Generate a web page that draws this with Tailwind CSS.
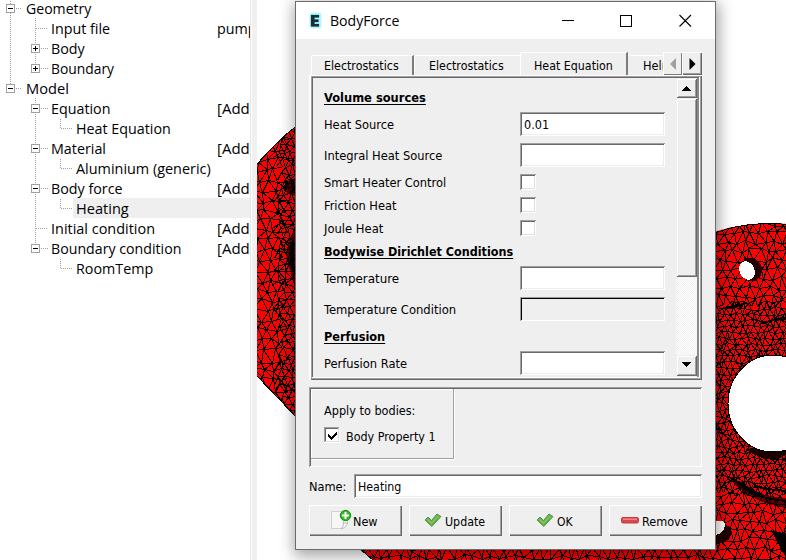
<!DOCTYPE html>
<html lang="en">
<head>
<meta charset="utf-8">
<title>BodyForce</title>
<script src="https://cdn.jsdelivr.net/npm/@tailwindcss/browser@4"></script>
</head>
<body class="relative w-[786px] h-[560px] overflow-hidden bg-white text-black flex">

<!-- Model tree -->
<aside class="relative w-[250px] h-[560px] shrink-0 overflow-hidden bg-white font-['Open_Sans',sans-serif] text-[14.3px] leading-[20px] whitespace-nowrap">
  <svg class="absolute left-0 top-0" width="250" height="290" shape-rendering="crispEdges" fill="none">
    <rect x="73" y="198" width="177" height="20" fill="#efefef"/>
    <g stroke="#a0a0a0" stroke-dasharray="1 1">
      <path d="M10.5 1V88M16 8.5H22M16 88.5H22"/>
      <path d="M35.5 18V68M36 28.5H48M41 48.5H48M41 68.5H48"/>
      <path d="M35.5 98V248M41 108.5H48M41 148.5H48M41 188.5H48M36 228.5H48M41 248.5H48"/>
      <path d="M60.5 119V129M61 128.5H72M60.5 159V169M61 168.5H72M60.5 199V209M61 208.5H72M60.5 259V269M61 268.5H72"/>
    </g>
    <g stroke="#a0a0a0" fill="#fff">
      <rect x="6.5" y="4.5" width="8" height="8"/><rect x="6.5" y="84.5" width="8" height="8"/>
      <rect x="31.5" y="44.5" width="8" height="8"/><rect x="31.5" y="64.5" width="8" height="8"/>
      <rect x="31.5" y="104.5" width="8" height="8"/><rect x="31.5" y="144.5" width="8" height="8"/>
      <rect x="31.5" y="184.5" width="8" height="8"/><rect x="31.5" y="244.5" width="8" height="8"/>
    </g>
    <path stroke="#000" d="M8 8.5H13M8 88.5H13M33 48.5H38M35.5 46V51M33 68.5H38M35.5 66V71M33 108.5H38M33 148.5H38M33 188.5H38M33 248.5H38"/>
  </svg>
  <div class="relative -mt-px flex flex-col">
    <div class="h-5 pl-[26px]"><span class="inline-block origin-left" data-w="65">Geometry</span></div>
    <div class="h-5 pl-[51px] flex"><span class="w-[166px] shrink-0"><span class="inline-block origin-left" data-w="59">Input file</span></span><span>pump</span></div>
    <div class="h-5 pl-[51px]"><span class="inline-block origin-left" data-w="34">Body</span></div>
    <div class="h-5 pl-[51px]"><span class="inline-block origin-left" data-w="63">Boundary</span></div>
    <div class="h-5 pl-[26px]"><span class="inline-block origin-left" data-w="43">Model</span></div>
    <div class="h-5 pl-[51px] flex"><span class="w-[166px] shrink-0"><span class="inline-block origin-left" data-w="59">Equation</span></span><span class="inline-block origin-left" data-w="32.5">[Add</span></div>
    <div class="h-5 pl-[76px]"><span class="inline-block origin-left" data-w="95">Heat Equation</span></div>
    <div class="h-5 pl-[51px] flex"><span class="w-[166px] shrink-0"><span class="inline-block origin-left" data-w="55">Material</span></span><span class="inline-block origin-left" data-w="32.5">[Add</span></div>
    <div class="h-5 pl-[76px]"><span class="inline-block origin-left" data-w="135">Aluminium (generic)</span></div>
    <div class="h-5 pl-[51px] flex"><span class="w-[166px] shrink-0"><span class="inline-block origin-left" data-w="72">Body force</span></span><span class="inline-block origin-left" data-w="32.5">[Add</span></div>
    <div class="h-5 pl-[76px]"><span class="inline-block origin-left" data-w="53">Heating</span></div>
    <div class="h-5 pl-[51px] flex"><span class="w-[166px] shrink-0"><span class="inline-block origin-left" data-w="104">Initial condition</span></span><span class="inline-block origin-left" data-w="32.5">[Add</span></div>
    <div class="h-5 pl-[51px] flex"><span class="w-[166px] shrink-0"><span class="inline-block origin-left" data-w="130">Boundary condition</span></span><span class="inline-block origin-left" data-w="32.5">[Add</span></div>
    <div class="h-5 pl-[76px]"><span class="inline-block origin-left" data-w="77">RoomTemp</span></div>
  </div>
</aside>
<div class="w-[7px] h-[560px] shrink-0 bg-[#f0f0f0] border-l border-[#e6e6e6] shadow-[inset_1px_0_#fff]"></div>

<!-- Mesh viewport -->
<main class="w-[529px] h-[560px] shrink-0 overflow-hidden bg-white">
  <svg width="529" height="560" viewBox="257 0 529 560" shape-rendering="crispEdges">
    <defs>
      <clipPath id="cl"><path d="M257 164L270 150L283 137L300 123V421L257 376Z"/></clipPath>
      <clipPath id="cr"><path d="M357 546H700V237Q735 223 775 223L786 224V560H373Z"/></clipPath>
    </defs>
    <g clip-path="url(#cl)">
      <rect x="257" y="100" width="60" height="330" fill="#f00"/>
      <path d="M300 178Q286 178 284 187Q286 196 300 196ZM300 225Q287 237 287 252Q288 275 300 292Z" fill="#600000"/>
      <path id="ml" fill="none" stroke="#000"/>
      <path d="M285 180l3 1-2 10h-2zM294 236l-4 10v18l5 12-1-20zM291 180h3v12h-2z" fill="#000"/>
    </g>
    <path d="M257 164L270 150L283 137L300 123M257 376L300 421" fill="none" stroke="#000"/>
    <g clip-path="url(#cr)">
      <rect x="340" y="210" width="450" height="360" fill="#f00"/>
      <path d="M728 476Q752 496 786 498V508Q746 502 728 476Z" fill="#600000"/>
      <path id="mr" fill="none" stroke="#000"/>
      <path id="mf" fill="none" stroke="#000"/>
      <path d="M744 258Q759 256 762 268Q762 278 755 281L748 281Z" fill="#200000"/>
      <path d="M716 522Q731 524 731 534Q730 543 716 544Z" fill="#200000"/>
      <path d="M745 449Q770 466 786 455V445Z" fill="#180000"/>
      <path d="M719 309l14-1 15-5-13 2zM760 324l14-5 12-2v2l-14 2zM728 476l20 15 14 4 -12-7zM772 531l14 3v23z" fill="#000" stroke="#000"/>
      <path d="M750 493Q770 500 786 501M754 486Q770 490 786 491" fill="none" stroke="#000" stroke-width="2"/>
    </g>
    <path d="M360 549L373 560M715 233Q740 223 775 223.500L786 224.500" fill="none" stroke="#000"/>
    <ellipse cx="773" cy="403.500" rx="45" ry="48.500" fill="#fff" stroke="#000"/>
    <ellipse cx="747" cy="270.500" rx="7.500" ry="9.500" transform="rotate(-25 747 270.500)" fill="#fff"/>
    <path d="M714 522Q722 519 725 523Q725 534 714 535Z" fill="#fff"/>
  </svg>
</main>

<!-- BodyForce dialog -->
<section class="absolute left-[295px] top-[1px] w-[421px] h-[549px] border border-[#6c6c6c] bg-[#efefef] shadow-[1px_4px_14px_2px_rgba(0,0,0,0.36)] flex flex-col font-['DejaVu_Sans_Condensed','DejaVu_Sans',sans-serif] text-[12px] leading-[16px] whitespace-nowrap">
  <header class="h-[37px] shrink-0 bg-white flex items-center pl-[13px]">
    <svg width="14" height="18" viewBox="0 0 14 18">
      <rect x="0.500" y="0.500" width="12" height="16" rx="3" fill="#b9f4f8"/>
      <path d="M2 3H10V5.500H5.500V7.500H9.500V10H5.500V12H10V14.500H2Z" fill="#202c30" stroke="#5fdde6" stroke-width="1" paint-order="stroke"/>
    </svg>
    <span class="ml-[7px] font-['Open_Sans',sans-serif] text-[14.3px] leading-[20px]"><span class="inline-block origin-left" data-w="69">BodyForce</span></span>
    <svg class="ml-auto mr-[22px]" width="131" height="14" viewBox="0 0 131 14" fill="none" stroke="#000">
      <path d="M0 6.500H12M58.500 1.500H69.500V12.500H58.500Z" shape-rendering="crispEdges"/>
      <path d="M117.500 1L129 12.500M129 1L117.500 12.500" stroke-width="1.100"/>
    </svg>
  </header>

  <div class="mt-[13px] ml-[13px] w-[393px] h-[23px] shrink-0 flex items-end overflow-hidden">
    <div class="ml-[2px] w-[103px] shrink-0 h-[20px] rounded-tl-[2px] border-t border-l border-white border-r-2 border-r-[#7c7c7c] pl-[12px] pt-[2px]"><span class="inline-block origin-left" data-w="75">Electrostatics</span></div>
    <div class="w-[106px] shrink-0 h-[20px] rounded-tl-[2px] border-t border-l border-white pl-[14px] pt-[2px]"><span class="inline-block origin-left" data-w="75">Electrostatics</span></div>
    <div class="w-[108px] shrink-0 h-[23px] rounded-tl-[2px] border-t border-l border-white border-r-2 border-r-[#7c7c7c] pl-[13px] pt-[5px]"><span class="inline-block origin-left" data-w="79">Heat Equation</span></div>
    <div class="w-[35px] shrink-0 h-[20px] border-t border-white pl-[15px] pt-[2px] overflow-hidden"><span class="inline-block origin-left" data-w="58">Helmholtz</span></div>
    <div class="w-[19px] shrink-0 h-[23px] bg-[#efefef] shadow-[inset_1px_1px_#fff,inset_-1px_-1px_#7c7c7c] flex items-center justify-center pl-px"><svg width="7" height="12"><path d="M6 0V12L0 6Z" fill="#a0a0a0"/></svg></div>
    <div class="w-[20px] shrink-0 h-[23px] bg-[#efefef] shadow-[inset_1px_1px_#fff,inset_-1px_-1px_#696969,inset_-2px_-2px_#a0a0a0] flex items-center justify-center"><svg width="7" height="12"><path d="M0.500 0V12L6.500 6Z"/></svg></div>
  </div>

  <div class="ml-[13px] w-[393px] h-[305px] shrink-0 shadow-[inset_2px_1px_#fff,inset_-1px_-1px_#696969,inset_-2px_-2px_#a0a0a0] p-[2px] pt-[1px]">
    <div class="w-[389px] h-[302px] shadow-[inset_1px_1px_#a0a0a0,inset_-1px_-1px_#fff,inset_2px_2px_#696969,inset_-3px_0_#8a8a8a] flex justify-between pl-[13px] pr-[3px] pt-[2px]">
      <div class="w-[341px] grid grid-cols-[196px_145px] grid-rows-[34px_31px_31px_23px_23px_23px_23px_31px_31px_23px_24px] content-start">
        <b class="col-span-2 pt-[12px]"><u class="inline-block origin-left underline-offset-2" data-w="102">Volume sources</u></b>
        <span class="pt-[5px]"><span class="inline-block origin-left" data-w="70">Heat Source</span></span>
        <div class="h-[24px] bg-white shadow-[inset_1px_1px_#a0a0a0,inset_-1px_-1px_#fff,inset_2px_2px_#696969,inset_-2px_-2px_#ececec] pl-[4px] pt-[5px]"><span class="inline-block origin-left" data-w="25">0.01</span></div>
        <span class="pt-[5px]"><span class="inline-block origin-left" data-w="118">Integral Heat Source</span></span>
        <div class="h-[24px] bg-white shadow-[inset_1px_1px_#a0a0a0,inset_-1px_-1px_#fff,inset_2px_2px_#696969,inset_-2px_-2px_#ececec]"></div>
        <span class="pt-px"><span class="inline-block origin-left" data-w="122">Smart Heater Control</span></span>
        <i class="size-[16px] bg-white shadow-[inset_1px_1px_#a0a0a0,inset_-1px_-1px_#fff,inset_2px_2px_#696969,inset_-2px_-2px_#dedede]"></i>
        <span class="pt-px"><span class="inline-block origin-left" data-w="72">Friction Heat</span></span>
        <i class="size-[16px] bg-white shadow-[inset_1px_1px_#a0a0a0,inset_-1px_-1px_#fff,inset_2px_2px_#696969,inset_-2px_-2px_#dedede]"></i>
        <span class="pt-px"><span class="inline-block origin-left" data-w="59">Joule Heat</span></span>
        <i class="size-[16px] bg-white shadow-[inset_1px_1px_#a0a0a0,inset_-1px_-1px_#fff,inset_2px_2px_#696969,inset_-2px_-2px_#dedede]"></i>
        <b class="col-span-2 pt-px"><u class="inline-block origin-left underline-offset-2" data-w="189">Bodywise Dirichlet Conditions</u></b>
        <span class="pt-[5px]"><span class="inline-block origin-left" data-w="75">Temperature</span></span>
        <div class="h-[24px] bg-white shadow-[inset_1px_1px_#a0a0a0,inset_-1px_-1px_#fff,inset_2px_2px_#696969,inset_-2px_-2px_#ececec]"></div>
        <span class="pt-[5px]"><span class="inline-block origin-left" data-w="132">Temperature Condition</span></span>
        <div class="h-[24px] shadow-[inset_1px_1px_#a0a0a0,inset_-1px_-1px_#fff,inset_2px_2px_#000]"></div>
        <b class="col-span-2 pt-px"><u class="inline-block origin-left underline-offset-2" data-w="61">Perfusion</u></b>
        <span class="pt-[5px]"><span class="inline-block origin-left" data-w="83">Perfusion Rate</span></span>
        <div class="h-[24px] bg-white shadow-[inset_1px_1px_#a0a0a0,inset_-1px_-1px_#fff,inset_2px_2px_#696969,inset_-2px_-2px_#ececec]"></div>
      </div>
      <div class="w-[21px] h-[298px] flex flex-col bg-[repeating-conic-gradient(#fff_0_25%,#efefef_0_50%)] bg-[length:2px_2px]">
        <div class="h-[20px] bg-[#efefef] shadow-[inset_1px_1px_#efefef,inset_-1px_-1px_#696969,inset_2px_2px_#fff,inset_-2px_-2px_#a0a0a0] flex items-center justify-center pr-px"><svg width="9" height="5" shape-rendering="crispEdges"><path d="M0 5H9L4.500 0Z"/></svg></div>
        <div class="h-[179px] bg-[#efefef] shadow-[inset_1px_1px_#efefef,inset_-1px_-1px_#696969,inset_2px_2px_#fff,inset_-2px_-2px_#a0a0a0]"></div>
        <div class="mt-auto h-[21px] bg-[#efefef] shadow-[inset_1px_1px_#efefef,inset_-1px_-1px_#696969,inset_2px_2px_#fff,inset_-2px_-2px_#a0a0a0] flex items-center justify-center pr-px pb-[2px]"><svg width="9" height="5" shape-rendering="crispEdges"><path d="M0 0H9L4.500 5Z"/></svg></div>
      </div>
    </div>
  </div>

  <div class="ml-[13px] mt-[7px] w-[393px] h-[80px] shrink-0 shadow-[inset_1px_1px_#a0a0a0,inset_-1px_-1px_#fff,inset_2px_2px_#696969] p-[2px]">
    <div class="w-[143px] h-[70px] border-r border-b border-[#a0a0a0] shadow-[1px_1px_#fff,inset_1px_1px_#fff] pl-[13px] pt-[14px] flex flex-col">
      <span><span class="inline-block origin-left" data-w="91">Apply to bodies:</span></span>
      <div class="mt-[8px] flex items-start">
        <svg width="16" height="16" shape-rendering="crispEdges"><path d="M0 0H16V16H0Z" fill="#fff"/><path d="M.5 15V.5H15" stroke="#a0a0a0" fill="none"/><path d="M1.500 14V1.500H14" stroke="#696969" fill="none"/><path d="M14.500 1V14.500H1" stroke="#dedede" fill="none"/><path d="M4 7V10L7 13L13 7V4L7 10Z" fill="#000"/></svg>
        <span class="ml-[6px] mt-[2px]"><span class="inline-block origin-left" data-w="90">Body Property 1</span></span>
      </div>
    </div>
  </div>

  <div class="ml-[13px] mt-[7px] w-[393px] h-[24px] shrink-0 flex">
    <span class="w-[45px] pt-[5px]"><span class="inline-block origin-left" data-w="38">Name:</span></span>
    <div class="w-[348px] h-[24px] bg-white shadow-[inset_1px_1px_#a0a0a0,inset_-1px_-1px_#fff,inset_2px_2px_#696969,inset_-2px_-2px_#ececec] pl-[4px] pt-[5px]"><span class="inline-block origin-left" data-w="43">Heating</span></div>
  </div>

  <div class="ml-[13px] mt-[7px] w-[393px] h-[31px] shrink-0 flex gap-[7px]">
    <div class="w-[93px] h-[31px] shadow-[inset_1px_1px_#fff,inset_-1px_-1px_#696969,inset_-2px_-2px_#a0a0a0] flex pl-[22px]">
      <svg class="mt-[4px]" width="21" height="21" viewBox="0 0 21 21">
        <path d="M.5 2.500H16.500V14L11.500 19.500H.5Z" fill="#f7f7f7" stroke="#d0d0d0"/>
        <path d="M16.500 14Q13 14.500 12.500 13Q13 17 10.500 19.500Q15 19 16.500 14Z" fill="#fff" stroke="#aaa" stroke-width=".8"/>
        <circle cx="14.500" cy="6.500" r="5.200" fill="#35b82c" stroke="#128c14"/>
        <path d="M14.500 3V10M11 6.500H18" stroke="#fff" stroke-width="2"/>
      </svg>
      <span class="ml-[1px] mt-[9px]"><span class="inline-block origin-left" data-w="25">New</span></span>
    </div>
    <div class="w-[93px] h-[31px] shadow-[inset_1px_1px_#fff,inset_-1px_-1px_#696969,inset_-2px_-2px_#a0a0a0] flex pl-[15px]">
      <svg class="mt-[8px]" width="18" height="15" viewBox="0 0 18 15"><path d="M1 7L4 4L7.500 7.500L13 1L17 3.500L7.800 13.500Z" fill="#62b247" stroke="#55924a" stroke-linejoin="round"/><path d="M3 6L7.500 10L14.500 3" stroke="#7cc763" stroke-width="1.600" fill="none"/></svg>
      <span class="ml-[3px] mt-[9px]"><span class="inline-block origin-left" data-w="40">Update</span></span>
    </div>
    <div class="w-[93px] h-[31px] shadow-[inset_1px_1px_#fff,inset_-1px_-1px_#696969,inset_-2px_-2px_#a0a0a0] flex pl-[27px]">
      <svg class="mt-[8px]" width="18" height="15" viewBox="0 0 18 15"><path d="M1 7L4 4L7.500 7.500L13 1L17 3.500L7.800 13.500Z" fill="#62b247" stroke="#55924a" stroke-linejoin="round"/><path d="M3 6L7.500 10L14.500 3" stroke="#7cc763" stroke-width="1.600" fill="none"/></svg>
      <span class="ml-[3px] mt-[9px]"><span class="inline-block origin-left" data-w="16">OK</span></span>
    </div>
    <div class="w-[93px] h-[31px] shadow-[inset_1px_1px_#fff,inset_-1px_-1px_#696969,inset_-2px_-2px_#a0a0a0] flex pl-[11px]">
      <svg class="mt-[12px]" width="20" height="8" viewBox="0 0 20 8"><rect x="1.500" y=".5" width="17" height="5.500" rx="1.500" fill="#d9474b" stroke="#c23c40"/><path d="M3 2.200H17" stroke="#f08c8c" stroke-width="1.400"/></svg>
      <span class="ml-[2px] mt-[9px]"><span class="inline-block origin-left" data-w="46">Remove</span></span>
    </div>
  </div>
</section>

<script>
function fit() {
  document.querySelectorAll('[data-w]').forEach(function (e) {
    e.style.transform = 'scaleX(' + (e.dataset.w / e.offsetWidth).toFixed(4) + ')';
  });
}
window.addEventListener('load', fit);

// Triangulated surface: a jittered grid with one diagonal in each cell.
var seed = 7;
function rnd() { seed = (seed * 16807) % 2147483647; return seed / 2147483647; }
function mesh(x0, y0, x1, y1, s, keep) {
  var cols = Math.ceil((x1 - x0) / s) + 1, rows = Math.ceil((y1 - y0) / s) + 1, p = [], d = '';
  for (var j = 0; j < rows; j++) {
    p.push([]);
    for (var i = 0; i < cols; i++)
      p[j].push([Math.round(x0 + (i + (j % 2) * 0.5 + (rnd() - 0.5) * 0.6) * s), Math.round(y0 + (j + (rnd() - 0.5) * 0.6) * s)]);
  }
  function line(a, b) {
    if (keep(a[0], a[1])) d += 'M' + (a[0] + 0.5) + ' ' + (a[1] + 0.5) + 'L' + (b[0] + 0.5) + ' ' + (b[1] + 0.5);
  }
  for (j = 0; j < rows - 1; j++)
    for (i = 0; i < cols - 1; i++) {
      line(p[j][i], p[j][i + 1]);
      line(p[j][i], p[j + 1][i]);
      if (j % 2) line(p[j][i], p[j + 1][i + 1]); else line(p[j][i + 1], p[j + 1][i]);
    }
  return d;
}
function near(x, y) { var r = Math.hypot(x - 773, y - 403); return r < 112 && y > 300 && y < 492; }
document.getElementById('ml').setAttribute('d',
  mesh(245, 110, 310, 430, 10, function (x) { return x < 282; }) +
  mesh(270, 110, 310, 430, 7, function (x) { return x >= 278; }));
document.getElementById('mr').setAttribute('d', mesh(345, 215, 800, 575, 9, function (x, y) { return !near(x, y) && (y > 530 || x > 700); }));
document.getElementById('mf').setAttribute('d', mesh(700, 290, 800, 510, 6, near));
</script>
</body>
</html>
